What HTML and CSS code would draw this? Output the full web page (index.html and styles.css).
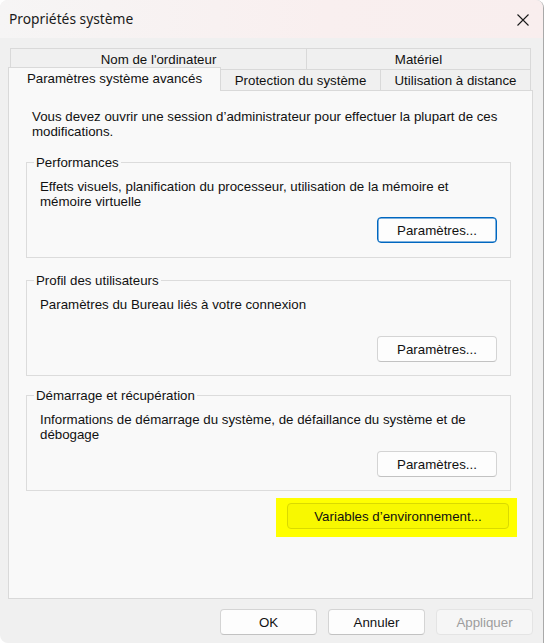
FILE: index.html
```html
<!DOCTYPE html>
<html lang="fr">
<head>
<meta charset="utf-8">
<title>Propriétés système</title>
<link rel="stylesheet" href="styles.css">
</head>
<body>
<div class="window">
  <div class="titlebar">
    <span class="title">Propriétés système</span>
    <svg class="close" width="12" height="12" viewBox="0 0 12 12"><path d="M0.5 0.5L11.5 11.5M11.5 0.5L0.5 11.5" stroke="#1a1a1a" stroke-width="1.1" fill="none"/></svg>
  </div>
  <div class="body">
    <div class="tabs">
      <div class="tabrow back">
        <div class="tab t-nom">Nom de l'ordinateur</div>
        <div class="tab t-mat">Matériel</div>
      </div>
      <div class="tabrow front">
        <div class="tab active t-adv">Paramètres système avancés</div>
        <div class="tab t-prot">Protection du système</div>
        <div class="tab t-dist">Utilisation à distance</div>
      </div>
    </div>
    <div class="panel">
      <p class="intro">Vous devez ouvrir une session d’administrateur pour effectuer la plupart de ces<br>modifications.</p>
      <div class="group g1">
        <span class="glabel">Performances</span>
        <p class="gtext">Effets visuels, planification du processeur, utilisation de la mémoire et<br>mémoire virtuelle</p>
        <button class="btn btn-param focus">Paramètres...</button>
      </div>
      <div class="group g2">
        <span class="glabel">Profil des utilisateurs</span>
        <p class="gtext">Paramètres du Bureau liés à votre connexion</p>
        <button class="btn btn-param">Paramètres...</button>
      </div>
      <div class="group g3">
        <span class="glabel">Démarrage et récupération</span>
        <p class="gtext">Informations de démarrage du système, de défaillance du système et de<br>débogage</p>
        <button class="btn btn-param">Paramètres...</button>
      </div>
      <div class="highlight">
        <button class="btn btn-env">Variables d’environnement...</button>
      </div>
    </div>
    <div class="footer">
      <button class="btn btn-foot">OK</button>
      <button class="btn btn-foot">Annuler</button>
      <button class="btn btn-foot disabled">Appliquer</button>
    </div>
  </div>
</div>
</body>
</html>
```
FILE: styles.css
```css
html, body {
  margin: 0;
  padding: 0;
  background: #ffffff;
}
body {
  font-family: "Liberation Sans", Arial, sans-serif;
  font-size: 13.3px;
  color: #111111;
}
.window {
  width: 544px;
  height: 643px;
  box-sizing: border-box;
  border-right: 1px solid #a9a9a9;
  border-radius: 8px 8px 0 8px;
  background: #f0f0f0;
  overflow: hidden;
  display: flex;
  flex-direction: column;
}
.titlebar {
  height: 38px;
  flex: none;
  display: flex;
  align-items: center;
  justify-content: space-between;
  padding: 0 14px 0 9px;
  background: linear-gradient(to right, #f6f5f5, #f9efef 60%, #f9eeee);
}
.title {
  font-family: "Noto Sans", "Liberation Sans", sans-serif;
  font-size: 13.8px;
  color: #1a1a1a;
  padding-bottom: 1px;
}
.close {
  display: block;
  margin-top: 1px;
}
.body {
  flex: 1;
  display: flex;
  flex-direction: column;
  padding-top: 10px;
}
.tabs {
  margin-left: 10px;
  width: 521px;
}
.tabrow {
  display: flex;
  height: 21px;
}
.tab {
  box-sizing: border-box;
  height: 21px;
  border: 1px solid #d9d9d9;
  border-bottom: none;
  background: #f0f0f0;
  display: flex;
  align-items: center;
  justify-content: center;
  line-height: 15px;
  white-space: nowrap;
}
.back .tab + .tab,
.front .tab + .tab + .tab {
  border-left: none;
}
.front {
  align-items: flex-end;
}
.t-nom { width: 297px; }
.t-mat { width: 224px; }
.t-adv { width: 213px; }
.t-prot { width: 160px; border-left: none; }
.t-dist { width: 150px; }
.tab.active {
  height: 24px;
  margin-left: -2px;
  margin-bottom: -1px;
  background: #f9f9f9;
  position: relative;
  z-index: 2;
  padding-bottom: 3px;
}
.panel {
  margin-left: 8px;
  width: 525px;
  height: 509px;
  box-sizing: border-box;
  border: 1px solid #d9d9d9;
  background: #f9f9f9;
  padding: 18px 0 0 17px;
  display: flex;
  flex-direction: column;
}
.intro {
  margin: 0 0 0 6px;
  line-height: 15px;
}
.group {
  position: relative;
  box-sizing: border-box;
  width: 485px;
  height: 96px;
  border: 1px solid #dcdcdc;
  padding: 16px 13px 14px 13px;
  display: flex;
  flex-direction: column;
}
.g1 { margin-top: 23px; }
.g2 { margin-top: 22px; padding-bottom: 13px; }
.g3 { margin-top: 19px; padding-bottom: 13px; }
.glabel {
  position: absolute;
  top: -8px;
  left: 7px;
  padding: 0 2px;
  background: #f9f9f9;
  line-height: 15px;
}
.gtext {
  margin: 0;
  line-height: 15px;
}
.btn {
  font-family: "Liberation Sans", Arial, sans-serif;
  font-size: 13.3px;
  color: #111111;
  box-sizing: border-box;
  border: 1px solid #d4d4d4;
  border-bottom-color: #c2c2c2;
  border-radius: 4px;
  background: #fdfdfd;
  padding: 0;
  line-height: 15px;
}
.btn-param {
  width: 120px;
  height: 26px;
  margin-top: auto;
  align-self: flex-end;
}
.btn.focus {
  border: 1px solid #0067c0;
  box-shadow: inset 0 0 0 0.5px #0067c0;
}
.highlight {
  align-self: flex-end;
  margin-top: 7px;
  margin-right: 15px;
  width: 241px;
  height: 39px;
  box-sizing: border-box;
  background: #ffff00;
  padding: 5px 8px 8px 11px;
}
.btn-env {
  width: 222px;
  height: 26px;
  background: #f8f800;
  border: 1px solid #dada00;
}
.footer {
  display: flex;
  justify-content: flex-end;
  gap: 11px;
  padding: 10px 10px 0 0;
}
.btn-foot {
  width: 97px;
  height: 26px;
}
.btn-foot.disabled {
  color: #9d9d9d;
  background: #f6f6f6;
  border-color: #e4e4e4;
}
```
